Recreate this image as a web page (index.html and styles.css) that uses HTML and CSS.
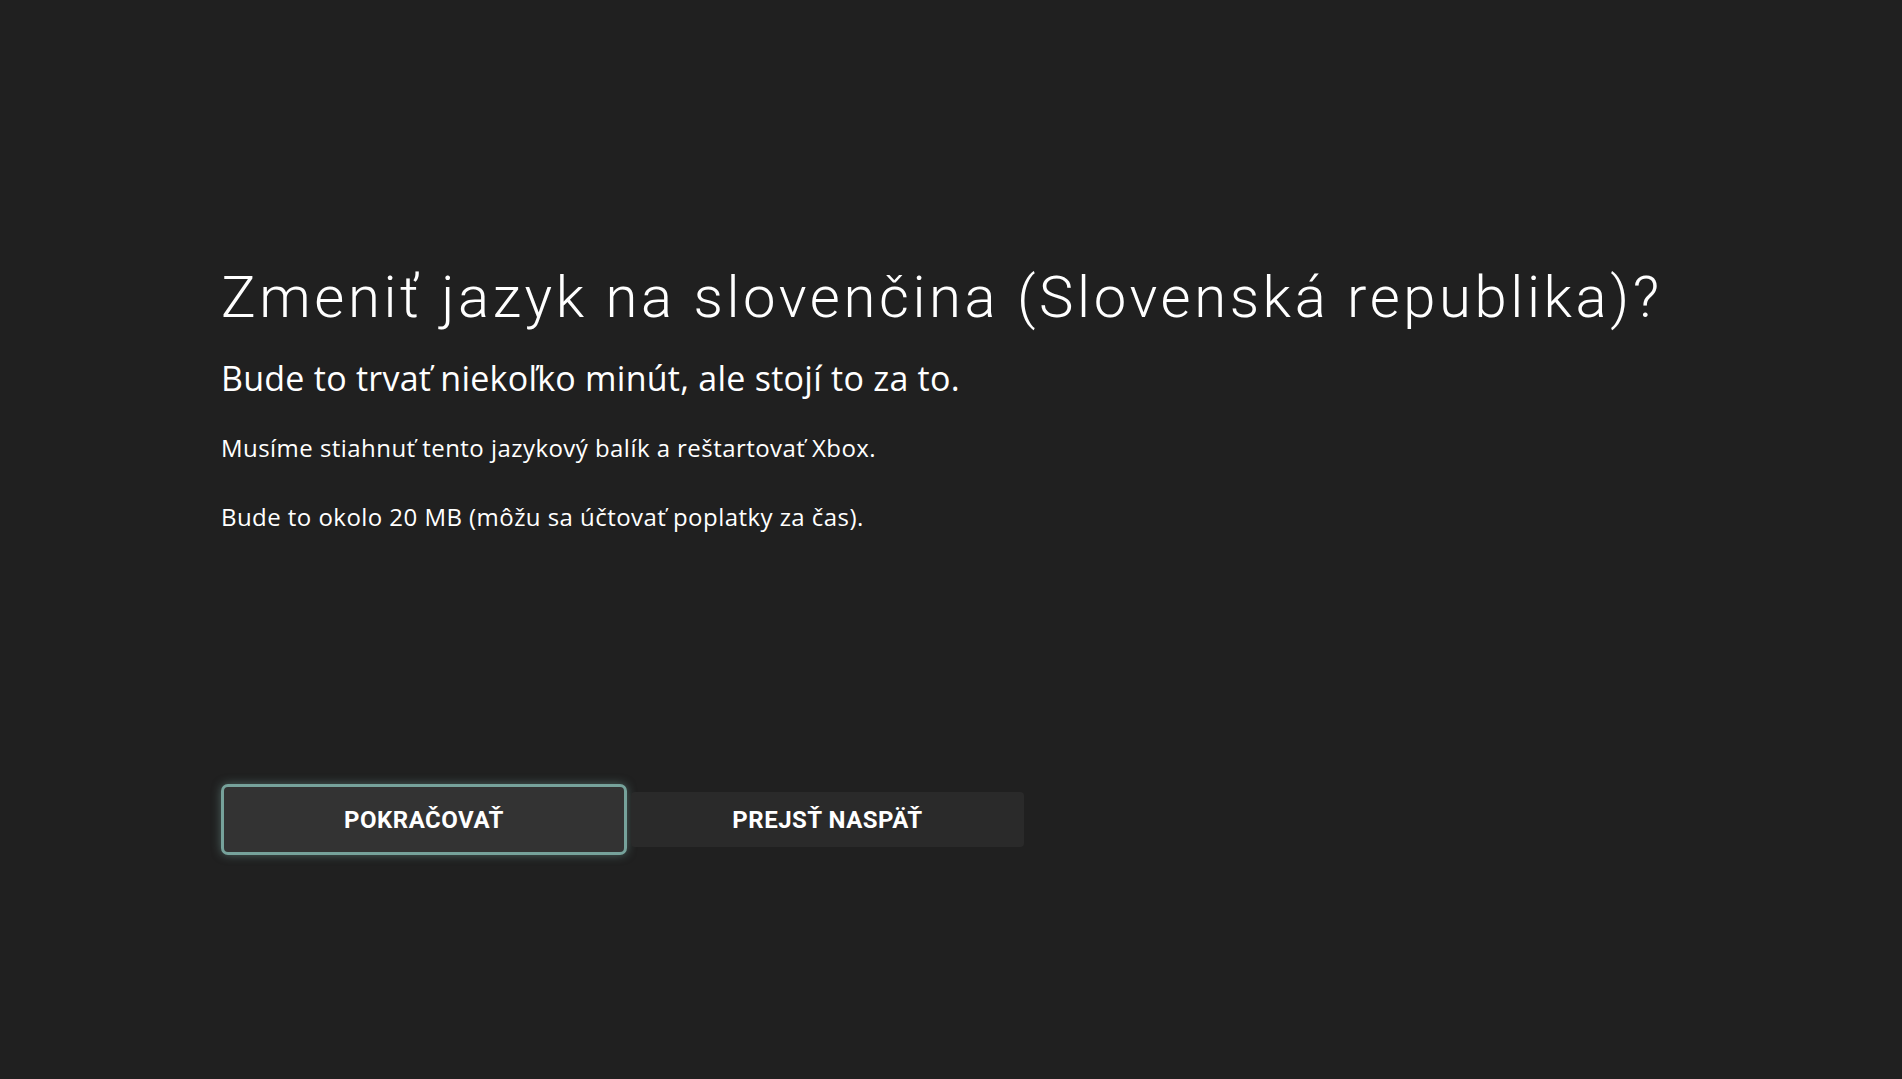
FILE: index.html
```html
<!DOCTYPE html>
<html lang="sk">
<head>
	<meta charset="UTF-8">
	<title>Zmeniť jazyk</title>
	<link rel="stylesheet" href="styles.css">
</head>
<body>
	<div class="dialog">
		<h1 class="title">Zmeniť jazyk na slovenčina (Slovenská republika)?</h1>
		<p class="subtitle">Bude to trvať niekoľko minút, ale stojí to za to.</p>
		<p class="text">Musíme stiahnuť tento jazykový balík a reštartovať Xbox.</p>
		<p class="text">Bude to okolo 20 MB (môžu sa účtovať poplatky za čas).</p>
		<div class="actions">
			<button class="btn btn-focus">POKRAČOVAŤ</button>
			<button class="btn">PREJSŤ NASPÄŤ</button>
		</div>
	</div>
</body>
</html>
```

FILE: styles.css
```css
html, body {
	margin: 0;
	height: 100%;
	background-color: #202020;
}
.dialog {
	padding: 262px 0 0 221px;
	color: #fff;
	font-family: "Open Sans", "Noto Sans", sans-serif;
}
.title {
	margin: 0;
	font-family: Roboto, "Liberation Sans", sans-serif;
	font-weight: 300;
	font-size: 58px;
	line-height: 70px;
	letter-spacing: 3.6px;
}
.subtitle {
	margin: 24px 0 0;
	font-size: 34px;
	line-height: 44px;
	letter-spacing: 0.25px;
}
.text {
	margin: 30px 0 0;
	font-size: 24px;
	line-height: 36px;
	letter-spacing: 0.45px;
}
.text + .text {
	margin-top: 33px;
}
.actions {
	display: flex;
	align-items: center;
	gap: 4px;
	margin-top: 249px;
}
.btn {
	width: 393px;
	height: 55px;
	border: none;
	border-radius: 4px;
	background-color: #2a2a2a;
	color: #fff;
	font-family: Roboto, "Liberation Sans", sans-serif;
	font-weight: 700;
	font-size: 24px;
	letter-spacing: 0.5px;
	padding: 0;
}
.btn-focus {
	width: 406px;
	height: 71px;
	border: 3px solid #76a29b;
	border-radius: 7px;
	background-color: #333;
	box-shadow: 0 0 10px rgba(118, 162, 155, 0.5);
}
```
